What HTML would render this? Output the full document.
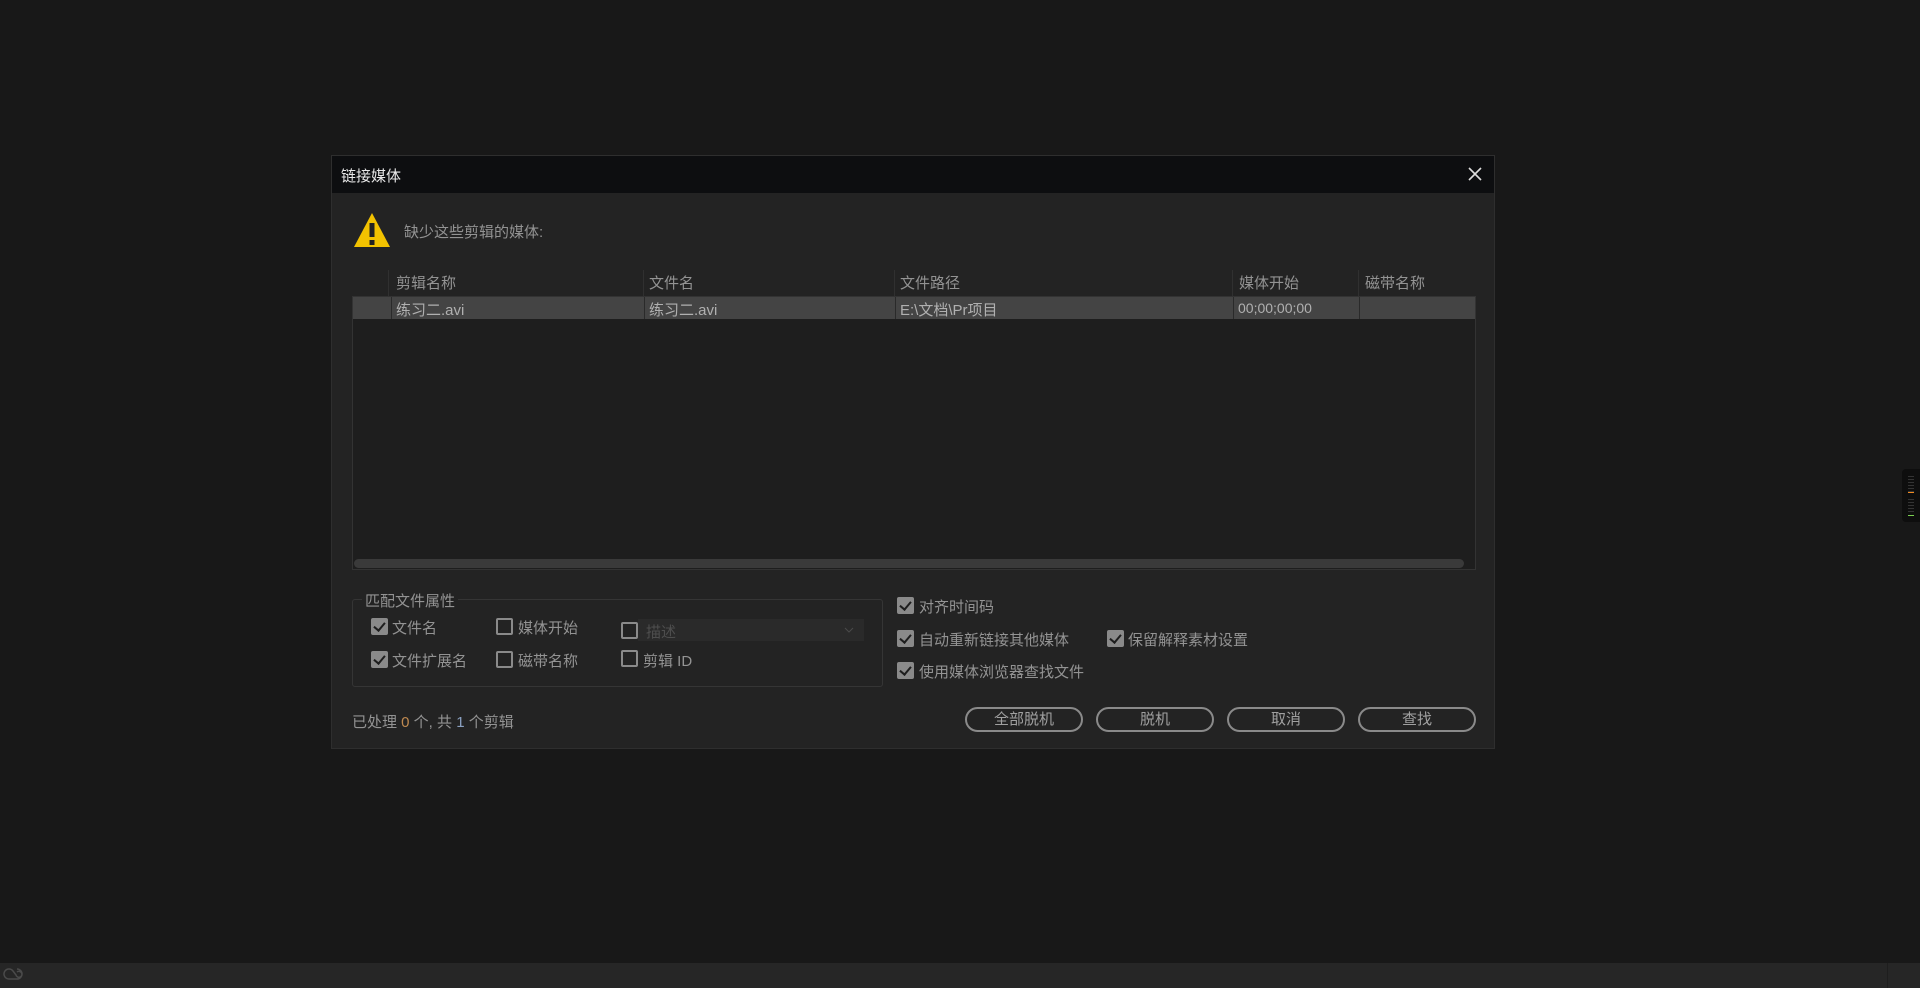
<!DOCTYPE html>
<html><head><meta charset="utf-8"><style>
*{margin:0;padding:0;box-sizing:border-box}
body{width:1920px;height:988px;background:#181818;position:relative;overflow:hidden;font-family:"Liberation Sans","Noto Sans CJK SC",sans-serif;font-size:15px;color:#939393}
.a{position:absolute;white-space:nowrap}
.dlg{position:absolute;left:331px;top:155px;width:1164px;height:594px;background:#232323;border:1px solid #2e2e2e}
.tb{position:absolute;left:0;top:0;width:100%;height:37px;background:#0d0e10}
.cb{position:absolute;width:17px;height:17px;border:2px solid #8a8a8a;border-radius:2px}
.cb.on{background:#8a8a8a;border:none}
.cb.on:after{content:"";position:absolute;left:5px;top:2px;width:5px;height:9px;border:solid #1e1e1e;border-width:0 2.5px 2.5px 0;transform:rotate(40deg)}
.btn{position:absolute;top:551px;height:25px;width:118px;border:2px solid #8a8a8a;border-radius:13px;text-align:center;line-height:21px;color:#a0a0a0}
.hd{position:absolute;top:116px}
.sep{position:absolute;width:1px;background:#303030}
</style></head><body>
<div class="dlg">
 <div class="tb"><span class="a" style="left:9px;top:9px;color:#e8e8e8;font-size:15px">链接媒体</span>
  <svg class="a" style="left:1136px;top:11px" width="14" height="14"><path d="M1 1L13 13M13 1L1 13" stroke="#ddd" stroke-width="1.6"/></svg></div>
 <svg class="a" style="left:21px;top:55px" width="38" height="38"><path d="M19 2L37 36H1Z" fill="#f2c200"/><rect x="16.5" y="12" width="5" height="14" fill="#222"/><rect x="16.5" y="29" width="5" height="5" fill="#222"/></svg>
 <span class="a" style="left:72px;top:65px">缺少这些剪辑的媒体:</span>
 <span class="hd a" style="left:64px">剪辑名称</span>
 <span class="hd a" style="left:317px">文件名</span>
 <span class="hd a" style="left:568px">文件路径</span>
 <span class="hd a" style="left:907px">媒体开始</span>
 <span class="hd a" style="left:1033px">磁带名称</span>
 <div class="sep" style="left:56px;top:114px;height:26px"></div>
 <div class="sep" style="left:311px;top:114px;height:26px"></div>
 <div class="sep" style="left:562px;top:114px;height:26px"></div>
 <div class="sep" style="left:900px;top:114px;height:26px"></div>
 <div class="sep" style="left:1026px;top:114px;height:26px"></div>
 <div class="a" style="left:20px;top:140px;width:1124px;height:274px;background:#1e1e1e;border:1px solid #333">
  <div class="a" style="left:0;top:0;width:1122px;height:22px;background:#444"></div>
  <div class="sep" style="left:38px;top:0;height:22px;background:#2a2a2a"></div>
  <div class="sep" style="left:291px;top:0;height:22px;background:#2a2a2a"></div>
  <div class="sep" style="left:542px;top:0;height:22px;background:#2a2a2a"></div>
  <div class="sep" style="left:880px;top:0;height:22px;background:#2a2a2a"></div>
  <div class="sep" style="left:1006px;top:0;height:22px;background:#2a2a2a"></div>
  <span class="a" style="left:43px;top:2px;color:#b0b0b0">练习二.avi</span>
  <span class="a" style="left:296px;top:2px;color:#b0b0b0">练习二.avi</span>
  <span class="a" style="left:547px;top:2px;color:#b0b0b0">E:\文档\Pr项目</span>
  <span class="a" style="left:885px;top:3px;color:#b0b0b0;font-size:14px">00;00;00;00</span>
  <div class="a" style="left:1px;top:262px;width:1110px;height:9px;background:#3a3a3a;border-radius:5px"></div>
 </div>
 <div class="a" style="left:20px;top:443px;width:531px;height:88px;border:1px solid #353535;border-radius:3px"></div>
 <span class="a" style="left:30px;top:434px;background:#232323;padding:0 3px">匹配文件属性</span>
 <div class="cb on" style="left:39px;top:462px"></div><span class="a" style="left:60px;top:461px">文件名</span>
 <div class="cb on" style="left:39px;top:495px"></div><span class="a" style="left:60px;top:494px">文件扩展名</span>
 <div class="cb" style="left:164px;top:462px"></div><span class="a" style="left:186px;top:461px">媒体开始</span>
 <div class="cb" style="left:164px;top:495px"></div><span class="a" style="left:186px;top:494px">磁带名称</span>
 <div class="cb" style="left:289px;top:466px"></div>
 <div class="a" style="left:306px;top:463px;width:226px;height:22px;background:#2a2a2a"><span class="a" style="left:8px;top:2px;color:#4e4e4e">描述</span><svg class="a" style="left:206px;top:8px" width="10" height="6"><path d="M1 1L5 5L9 1" stroke="#4a4a4a" fill="none"/></svg></div>
 <div class="cb" style="left:289px;top:494px"></div><span class="a" style="left:311px;top:494px">剪辑 ID</span>
 <div class="cb on" style="left:565px;top:441px"></div><span class="a" style="left:587px;top:440px">对齐时间码</span>
 <div class="cb on" style="left:565px;top:474px"></div><span class="a" style="left:587px;top:473px">自动重新链接其他媒体</span>
 <div class="cb on" style="left:775px;top:474px"></div><span class="a" style="left:796px;top:473px">保留解释素材设置</span>
 <div class="cb on" style="left:565px;top:506px"></div><span class="a" style="left:587px;top:505px">使用媒体浏览器查找文件</span>
 <span class="a" style="left:20px;top:555px">已处理 <span style="color:#c08a50">0</span> 个, 共 <span style="color:#8aa0c0">1</span> 个剪辑</span>
 <div class="btn" style="left:633px">全部脱机</div>
 <div class="btn" style="left:764px">脱机</div>
 <div class="btn" style="left:895px">取消</div>
 <div class="btn" style="left:1026px">查找</div>
</div>
<div class="a" style="left:1902px;top:469px;width:18px;height:53px;background:#0e0e0e;border-radius:4px 0 0 4px">
 <div class="a" style="left:6px;top:7px;width:6px;height:16px;background:repeating-linear-gradient(#333 0 1px,transparent 1px 3px)"></div>
 <div class="a" style="left:6px;top:23px;width:6px;height:1px;background:#f08a20"></div>
 <div class="a" style="left:6px;top:30px;width:6px;height:15px;background:repeating-linear-gradient(#333 0 1px,transparent 1px 3px)"></div>
 <div class="a" style="left:6px;top:46px;width:6px;height:1px;background:#7ad050"></div>
</div>
<div class="a" style="left:0;top:963px;width:1920px;height:25px;background:#262626"></div>
<div class="a" style="left:1887px;top:963px;width:1px;height:25px;background:#1e1e1e"></div>
<svg class="a" style="left:3px;top:966px" width="20" height="16"><path d="M6 13a5 5 0 1 1 4-8l3 4a3 3 0 1 0 1-3M6 13h8a5 5 0 0 0 0-10" stroke="#4a4a4a" stroke-width="1.5" fill="none"/></svg>
</body></html>
